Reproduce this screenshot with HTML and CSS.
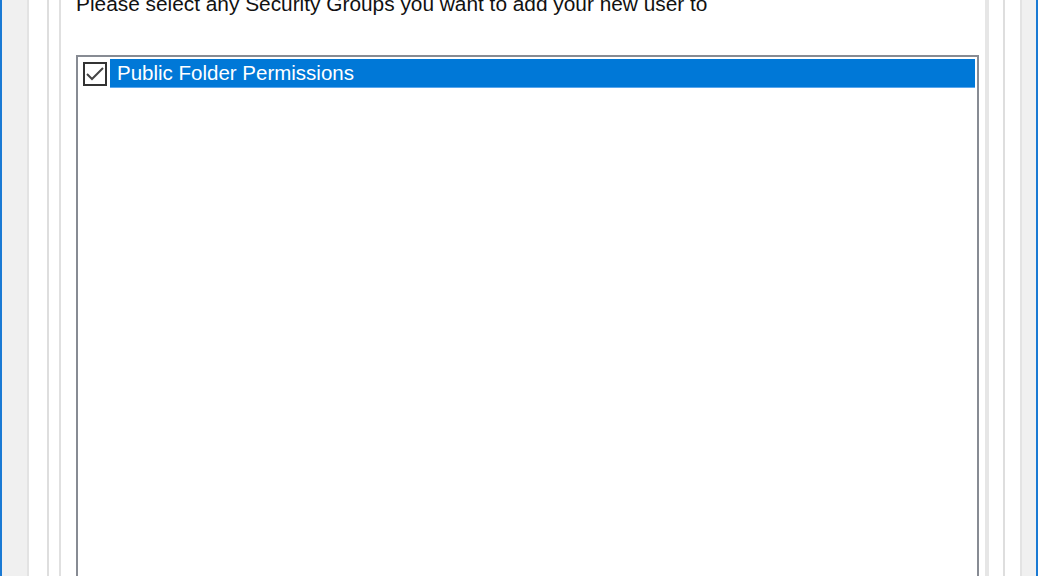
FILE: index.html
```html
<!DOCTYPE html>
<html lang="en">
<head>
  <meta charset="UTF-8">
  <title>Security Groups</title>
  <link rel="stylesheet" href="styles.css">
</head>
<body>
  <div class="window">
    <div class="panel">
      <div class="group">
        <div class="page">
          <p class="prompt">Please select any Security Groups you want to add your new user to</p>
          <div class="listbox">
            <div class="item">
              <span class="check">
                <svg width="20" height="20" viewBox="0 0 20 20"><polyline points="2,10 7,15 18,4" fill="none" stroke="#444" stroke-width="2"/></svg>
              </span>
              <span class="label selected">Public Folder Permissions</span>
            </div>
          </div>
        </div>
      </div>
    </div>
  </div>
</body>
</html>
```

FILE: styles.css
```css
html, body { margin: 0; height: 100%; overflow: hidden; background: #fff; }
body { font-family: "Liberation Sans", Arial, sans-serif; font-size: 21px; color: #000; }

.window { height: 100%; box-sizing: border-box; border-left: 2px solid #1a7ad4; border-right: 2px solid #1a7ad4; background: #f0f0f0; padding: 0 14px 0 25px; }
.panel { height: 100%; box-sizing: border-box; border-left: 2px solid #e3e3e3; border-right: 2px solid #e3e3e3; background: #fff; padding: 0 15px 0 18px; }
.group { height: 100%; box-sizing: border-box; border-left: 2px solid #dedede; border-right: 2px solid #dedede; padding: 0 14px 0 10px; }
.page { height: 100%; box-sizing: border-box; border-left: 2px solid #e0e0e0; border-right: 4px solid #e6e6e6; padding: 0 6px 0 15px; display: flex; flex-direction: column; }

.prompt { margin: -7px 0 0 0; font-size: 20.85px; line-height: 22px; height: 22px; white-space: nowrap; color: #111; }
.listbox { flex: 1; margin: 40px 0 -4px 0; border: 2px solid #878b93; padding: 2px 2px 0 5px; background: #fff; }
.item { display: flex; align-items: center; height: 29px; }
.check { width: 20px; height: 20px; border: 2px solid #333; display: flex; align-items: center; justify-content: center; margin-right: 3px; }
.check svg { display: block; }
.label { flex: 1; height: 28px; line-height: 28px; padding-left: 7px; font-size: 20.5px; border-bottom: 1px solid #5aa6ec; white-space: nowrap; }
.selected { background: #0078d7; color: #fff; }
```
